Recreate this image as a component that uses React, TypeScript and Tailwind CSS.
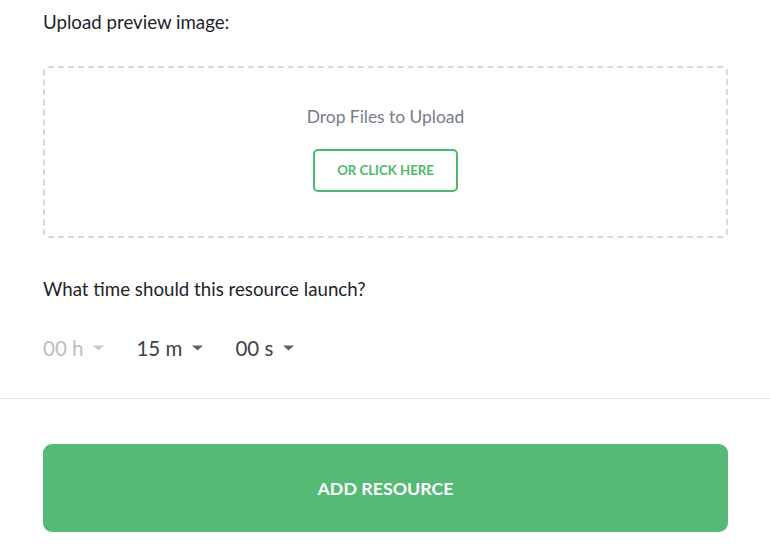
import React from 'react';

const units = [
  { value: '00', unit: 'h', muted: true },
  { value: '15', unit: 'm', muted: false },
  { value: '00', unit: 's', muted: false },
];

function Caret({ muted }: { muted: boolean }) {
  return (
    <svg width="11" height="6" viewBox="0 0 11 6" className={muted ? 'fill-[#c6cad1]' : 'fill-[#5a606b]'}>
      <path d="M0 0.5 L11 0.5 L5.5 5.5 Z" />
    </svg>
  );
}

export default function App() {
  return (
    <div className="min-h-[550px] bg-white font-['Lato','Open_Sans',sans-serif] text-[#1f2328]">
      <div className="pl-[43px] pr-[42px] pt-[10px]">
        <p className="text-[18.7px] leading-6">Upload preview image:</p>

        {/* Dropzone */}
        <div className="mt-[32px] flex h-[172px] flex-col items-center rounded-[5px] border-2 border-dashed border-[#d6d9e3] pt-[37px]">
          <p className="text-[17.4px] leading-6 text-[#767c89]">Drop Files to Upload</p>
          <button className="mt-[20px] h-[43px] w-[145px] rounded-[5px] border-2 border-[#4cb96b] text-[13.2px] font-bold text-[#4cb96b]">
            OR CLICK HERE
          </button>
        </div>

        <p className="mt-[39px] text-[18.7px] leading-6">What time should this resource launch?</p>

        {/* Time selects */}
        <div className="mt-[33px] flex h-[28px] items-center">
          {units.map((u, i) => (
            <div key={i} className="mr-[32px] flex items-center gap-[10px]">
              <span className={`text-[20.5px] leading-7 ${u.muted ? 'text-[#b9bdc5]' : 'text-[#3d424b]'}`}>
                {u.value} {u.unit}
              </span>
              <Caret muted={u.muted} />
            </div>
          ))}
        </div>
      </div>

      <div className="mt-[36px] border-t border-[#e6e6e6]" />

      <div className="pl-[43px] pr-[42px] pt-[45px]">
        <button className="h-[88px] w-full rounded-[9px] bg-[#56ba77] text-[17.8px] font-bold text-white">
          ADD RESOURCE
        </button>
      </div>
    </div>
  );
}
